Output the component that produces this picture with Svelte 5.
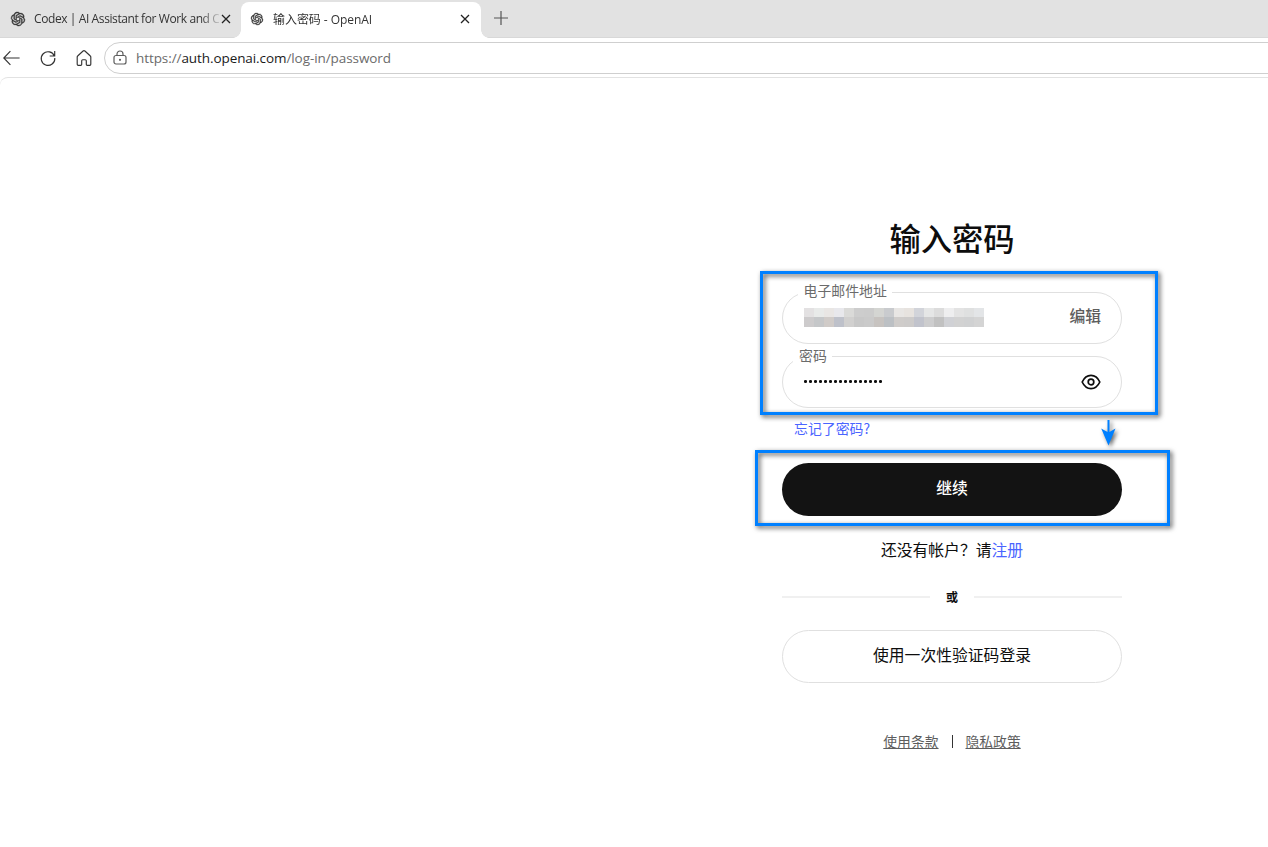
<script>
	let email = $state('');
	let showPassword = $state(false);

	const tabs = [
		{ title: 'Codex | AI Assistant for Work and C', active: false },
		{ title: '输入密码 - OpenAI', active: true }
	];

	const mosaic = [
		['#e3e1e2', '#e8eae9', '#e9e6e4', '#e8e8ec', '#dadad8', '#cdcdcd', '#cccccc', '#d4d5d2', '#c9cbce', '#e8e6e4', '#e7e3df', '#d2d4da', '#e5e6e6', '#dcdcdc', '#eeeeef', '#e3e3e3', '#dfe0e0', '#e3e5e7'],
		['#cdcbcc', '#c5c7c9', '#d0cbc8', '#bec1ca', '#d1d0cf', '#c8c8c8', '#cacaca', '#c7c3c0', '#bcc0c4', '#cfccca', '#cdcbca', '#c1c3cc', '#cdcdce', '#c1c1c1', '#d0d1d5', '#d2d2d2', '#d0d1d2', '#d4d4d4']
	];

	const dots = Array(16).fill(0);
</script>

{#snippet logo(size)}
	<svg class="logo" width={size} height={size} viewBox="0 0 24 24">
		<path
			d="M22.2819 9.8211a5.9847 5.9847 0 0 0-.5157-4.9108 6.0462 6.0462 0 0 0-6.5098-2.9A6.0651 6.0651 0 0 0 4.9807 4.1818a5.9847 5.9847 0 0 0-3.9977 2.9 6.0462 6.0462 0 0 0 .7427 7.0966 5.98 5.98 0 0 0 .511 4.9107 6.051 6.051 0 0 0 6.5146 2.9001A5.9847 5.9847 0 0 0 13.2599 24a6.0557 6.0557 0 0 0 5.7718-4.2058 5.9894 5.9894 0 0 0 3.9977-2.9001 6.0557 6.0557 0 0 0-.7475-7.0729zm-9.022 12.6081a4.4755 4.4755 0 0 1-2.8764-1.0408l.1419-.0804 4.7783-2.7582a.7948.7948 0 0 0 .3927-.6813v-6.7369l2.02 1.1686a.071.071 0 0 1 .038.052v5.5826a4.504 4.504 0 0 1-4.4945 4.4944zm-9.6607-4.1254a4.4708 4.4708 0 0 1-.5346-3.0137l.142.0852 4.783 2.7582a.7712.7712 0 0 0 .7806 0l5.8428-3.3685v2.3324a.0804.0804 0 0 1-.0332.0615L9.74 19.9502a4.4992 4.4992 0 0 1-6.1408-1.6464zM2.3408 7.8956a4.485 4.485 0 0 1 2.3655-1.9728V11.6a.7664.7664 0 0 0 .3879.6765l5.8144 3.3543-2.0201 1.1685a.0757.0757 0 0 1-.071 0l-4.8303-2.7865A4.504 4.504 0 0 1 2.3408 7.872zm16.5963 3.8558L13.1038 8.364 15.1192 7.2a.0757.0757 0 0 1 .071 0l4.8303 2.7913a4.4944 4.4944 0 0 1-.6765 8.1042v-5.6772a.79.79 0 0 0-.407-.667zm2.0107-3.0231l-.142-.0852-4.7735-2.7818a.7759.7759 0 0 0-.7854 0L9.409 9.2297V6.8974a.0662.0662 0 0 1 .0284-.0615l4.8303-2.7866a4.4992 4.4992 0 0 1 6.6802 4.66zM8.3065 12.863l-2.02-1.1638a.0804.0804 0 0 1-.038-.0567V6.0742a4.4992 4.4992 0 0 1 7.3757-3.4537l-.142.0805L8.704 5.459a.7948.7948 0 0 0-.3927.6813zm1.0976-2.3654l2.602-1.4998 2.6069 1.4998v2.9994l-2.5974 1.4997-2.6067-1.4997Z"
		/>
	</svg>
{/snippet}

<div class="browser">
	<div class="tab-bar">
		{#each tabs as tab}
			<div class="tab" class:active={tab.active}>
				{@render logo(tab.active ? 12 : 14)}
				<span class="tab-title">{tab.title}</span>
				<svg class="close" width="10" height="10" viewBox="0 0 10 10">
					<path d="M1 1l8 8M9 1l-8 8" />
				</svg>
			</div>
		{/each}
		<svg class="new-tab" width="16" height="16" viewBox="0 0 16 16">
			<path d="M8 1v14M1 8h14" />
		</svg>
	</div>

	<div class="toolbar">
		<svg class="nav" width="18" height="18" viewBox="0 0 18 18">
			<path d="M16.6 9H1M7.4 2.2L.8 9l6.6 6.8" />
		</svg>
		<svg class="nav" width="18" height="18" viewBox="0 0 18 18">
			<path d="M15.4 7.2A6.8 6.8 0 1 0 15.8 9M15.7 2v5h-5" />
		</svg>
		<svg class="nav" width="18" height="18" viewBox="0 0 18 18">
			<path d="M2.2 8.1v7.2q0 1 1 1h2.6q.9 0 .9-.9v-3.6q0-1.1 1.1-1.1h2.4q1.1 0 1.1 1.1v3.6q0 .9.9.9h2.6q1 0 1-1V8.1q0-.8-.7-1.4L9.9 2q-.9-.8-1.8 0L2.9 6.7q-.7.6-.7 1.4z" />
		</svg>
		<div class="address">
			<svg class="lock" width="14" height="16" viewBox="0 0 14 16">
				<rect x="1" y="5.5" width="12" height="8.5" rx="2" />
				<path d="M4 5.5V4a3 3 0 0 1 6 0v1.5" />
				<circle cx="7" cy="9.8" r=".5" />
			</svg>
			<span class="url">https://<b>auth.openai.com</b>/log-in/password</span>
		</div>
	</div>

	<main class="page">
		<div class="login">
			<h1>输入密码</h1>

			<div class="fields">
				<div class="field email">
					<span class="label">电子邮件地址</span>
					<div class="mosaic" aria-label={email}>
						{#each mosaic as row}
							{#each row as color}
								<i style="background: {color}"></i>
							{/each}
						{/each}
					</div>
					<button type="button" class="edit">编辑</button>
				</div>
				<div class="field password">
					<span class="label">密码</span>
					<div class="dots">
						{#each dots as _}
							<i></i>
						{/each}
					</div>
					<button type="button" class="eye" aria-pressed={showPassword} onclick={() => (showPassword = !showPassword)}>
						<svg width="20" height="16" viewBox="0 0 20 16">
							<path d="M1.2 8C3.1 3.8 6.3 1.4 10 1.4S16.9 3.8 18.8 8C16.9 12.2 13.7 14.6 10 14.6S3.1 12.2 1.2 8z" />
							<circle cx="10" cy="8" r="2.8" />
						</svg>
					</button>
				</div>
				<div class="frame frame-fields"></div>
			</div>

			<div class="forgot">
				<a href="#forgot">忘记了密码?</a>
				<svg class="arrow" width="16" height="26" viewBox="0 0 16 26">
					<path d="M7.5 0h2v12l6-3.4L8.5 25.5L1.2 8.6l6.3 3.4z" />
				</svg>
			</div>

			<div class="submit">
				<button type="button" class="continue">继续</button>
				<div class="frame frame-submit"></div>
			</div>

			<p class="signup">还没有帐户？请<a href="#signup">注册</a></p>

			<div class="divider"><span>或</span></div>

			<button type="button" class="one-time">使用一次性验证码登录</button>

			<footer>
				<a href="#terms">使用条款</a>
				<span class="bar"></span>
				<a href="#privacy">隐私政策</a>
			</footer>
		</div>
	</main>
</div>

<style>
	:global(body) {
		margin: 0;
		background: #fff;
	}

	.browser {
		width: 100%;
		height: 847px;
		overflow: hidden;
		font-family: 'Noto Sans CJK SC', sans-serif;
		color: #0d0d0d;
	}

	svg {
		flex-shrink: 0;
		fill: none;
		stroke: currentColor;
	}

	button {
		font-family: inherit;
		padding: 0;
		cursor: pointer;
	}

	.logo {
		fill: currentColor;
		stroke-width: 0.7;
		overflow: visible;
	}

	/* Tabs */
	.tab-bar {
		display: flex;
		height: 38px;
		background: #e2e2e2;
		box-shadow: inset 0 -1px #d8d8d8;
	}

	.tab {
		position: relative;
		box-sizing: border-box;
		width: 241px;
		display: flex;
		align-items: center;
		padding: 0 10px 1px 11px;
		color: #333;
		font-family: 'Open Sans', 'Noto Sans CJK SC', sans-serif;
		font-size: 12px;
	}

	.tab-title {
		flex: 1;
		min-width: 0;
		margin: 0 2px 0 9px;
		white-space: nowrap;
		letter-spacing: -0.4px;
		mask-image: linear-gradient(to right, #000 90%, transparent 102%);
	}

	.tab.active {
		width: 240px;
		height: 36px;
		margin-top: 2px;
		padding: 0 11px 3px 10px;
		background: #fff;
		border-radius: 8px 8px 0 0;
	}

	.tab.active .tab-title {
		margin-left: 10px;
		letter-spacing: -0.05px;
	}

	.tab.active::before,
	.tab.active::after {
		content: '';
		position: absolute;
		bottom: 0;
		width: 8px;
		height: 8px;
	}

	.tab.active::before {
		left: -8px;
		background: radial-gradient(circle at 0 0, transparent 7.5px, #fff 8px);
	}

	.tab.active::after {
		right: -8px;
		background: radial-gradient(circle at 100% 0, transparent 7.5px, #fff 8px);
	}

	.close {
		stroke: #222;
		stroke-width: 1.3;
	}

	.new-tab {
		margin: 10px 0 0 12px;
		stroke: #555;
		stroke-width: 1.2;
	}

	/* Toolbar */
	.toolbar {
		display: flex;
		align-items: center;
		height: 39px;
		padding: 0 0 0 3px;
		gap: 18px;
	}

	.nav {
		stroke: #333;
		stroke-width: 1.15;
	}

	.address {
		box-sizing: border-box;
		flex: 1;
		display: flex;
		align-items: center;
		height: 32px;
		margin: 1px -20px 0 -7px;
		padding-left: 8px;
		border: 1px solid #cfcfcf;
		border-radius: 16px;
		font-family: 'Open Sans', sans-serif;
		font-size: 13.5px;
		letter-spacing: -0.08px;
		color: #6b6b6b;
	}

	.lock {
		stroke: #5c5c5c;
		stroke-width: 1.2;
	}

	.url {
		margin-left: 9px;
		white-space: nowrap;
	}

	.url b {
		font-weight: 400;
		color: #1a1a1a;
	}

	/* Page */
	.page {
		box-sizing: border-box;
		height: 770px;
		border-top: 1px solid #e2e2e2;
		border-radius: 8px 0 0 0;
	}

	.login {
		width: 340px;
		margin-left: 782px;
		padding-top: 137px;
	}

	h1 {
		height: 46px;
		margin: 0 0 31px;
		font-size: 31.3px;
		font-weight: 500;
		line-height: 46px;
		text-align: center;
	}

	.fields,
	.submit {
		position: relative;
	}

	.field {
		position: relative;
		box-sizing: border-box;
		display: flex;
		align-items: center;
		justify-content: space-between;
		height: 52px;
		padding: 0 20px 0 21px;
		border: 1px solid #e0e0e0;
		border-radius: 26px;
	}

	.field.password {
		margin-top: 12px;
	}

	.label {
		position: absolute;
		top: -13px;
		left: 15px;
		padding: 0 5px 0 5.5px;
		background: #fff;
		font-size: 13.9px;
		line-height: 20px;
		color: #6b6b6b;
	}

	.password .label {
		top: -12px;
		left: 10px;
		padding-left: 6px;
	}

	.mosaic {
		display: grid;
		grid-template: 9px 10px / repeat(18, 10px);
		margin-top: -2px;
	}

	.edit {
		border: 0;
		background: none;
		font-size: 15.8px;
		line-height: 24px;
		font-weight: 500;
		color: #5d5d5d;
		margin-top: -4px;
	}

	.dots {
		display: flex;
		gap: 2px;
		margin-top: -1px;
	}

	.dots i {
		width: 3px;
		height: 3px;
		border-radius: 1.3px;
		background: #0d0d0d;
	}

	.eye {
		display: flex;
		border: 0;
		background: none;
		color: #0d0d0d;
	}

	.eye svg {
		stroke-width: 1.7;
	}

	/* Highlight frames over the form */
	.frame {
		position: absolute;
		border: 3px solid #0080ff;
		filter: drop-shadow(2px 2px 2.5px rgba(0, 0, 0, 0.7));
		pointer-events: none;
	}

	.frame-fields {
		inset: -21px -36px -7px -22px;
	}

	.frame-submit {
		inset: -13px -48px -10px -27px;
	}

	.forgot {
		display: flex;
		justify-content: space-between;
		height: 55px;
		padding: 0 6px 0 12px;
		box-sizing: border-box;
	}

	.forgot a {
		margin-top: 10px;
		font-size: 13.9px;
		line-height: 20px;
	}

	a {
		color: #4a64ff;
		text-decoration: none;
	}

	.arrow {
		margin-top: 12px;
		fill: #0080ff;
		stroke: none;
		overflow: visible;
		filter: drop-shadow(2px 2px 2px rgba(0, 0, 0, 0.6));
	}

	.continue,
	.one-time {
		display: block;
		box-sizing: border-box;
		width: 100%;
		height: 53px;
		border-radius: 27px;
		font-size: 15.8px;
		font-weight: 500;
		padding-bottom: 4px;
	}

	.continue {
		border: 0;
		background: #131313;
		color: #fff;
	}

	.signup {
		margin: 22px 0 0;
		font-size: 15.8px;
		line-height: 24px;
		text-align: center;
	}

	.divider {
		display: flex;
		align-items: center;
		gap: 16px;
		margin-top: 25px;
		font-size: 12px;
		line-height: 20px;
		font-weight: 700;
	}

	.divider::before,
	.divider::after {
		content: '';
		flex: 1;
		height: 2px;
		background: #f0f0f0;
	}

	.one-time {
		margin-top: 23px;
		border: 1px solid #e0e0e0;
		background: #fff;
		color: #0d0d0d;
		font-weight: 400;
	}

	footer {
		display: flex;
		align-items: center;
		justify-content: center;
		margin-top: 47px;
		font-size: 13.8px;
		line-height: 22px;
	}

	footer a {
		color: #5d5d5d;
		text-decoration: underline;
	}

	.bar {
		width: 1px;
		height: 13px;
		margin: 0 13px;
		background: #333;
	}
</style>
